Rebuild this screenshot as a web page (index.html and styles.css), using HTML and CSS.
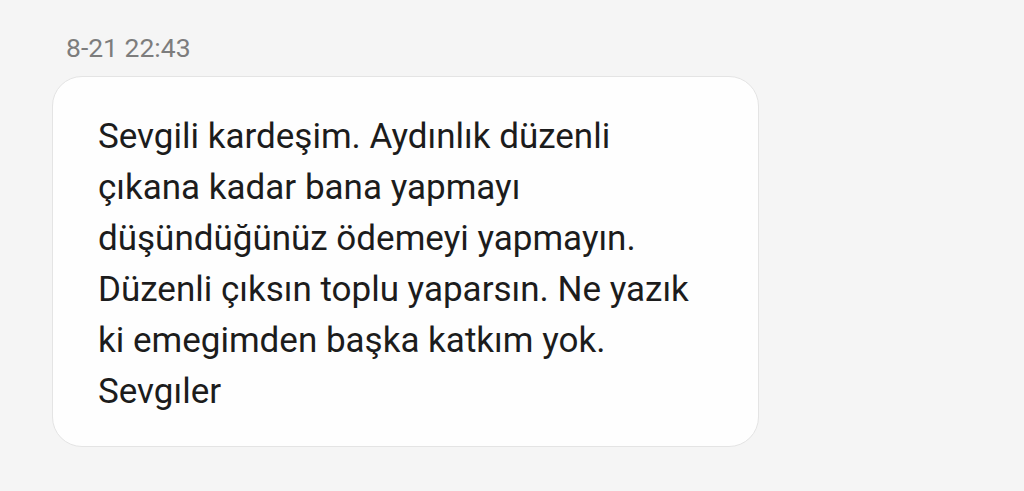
FILE: index.html
```html
<!DOCTYPE html>
<html lang="tr">
<head>
	<meta charset="UTF-8">
	<meta name="viewport" content="width=device-width, initial-scale=1.0">
	<link rel="stylesheet" href="styles.css">
	<title>Mesaj</title>
</head>
<body>
	<div class="thread">
		<div class="time">8-21 22:43</div>
		<div class="bubble">
			<p>Sevgili kardeşim. Aydınlık düzenli<br>
			çıkana kadar bana yapmayı<br>
			düşündüğünüz ödemeyi yapmayın.<br>
			Düzenli çıksın toplu yaparsın. Ne yazık<br>
			ki emegimden başka katkım yok.<br>
			Sevgıler</p>
		</div>
	</div>
</body>
</html>
```

FILE: styles.css
```css
body {
	margin: 0;
	padding: 0;
	font-family: Roboto, 'Noto Sans', Arial, sans-serif;
	background: #f5f5f5;
}

p {
	margin: 0;
}

.thread {
	padding: 31px 0 0 52px;
}

.time {
	font-size: 26.5px;
	line-height: 34px;
	color: #7d7d7d;
	padding-left: 14px;
	margin-bottom: 11px;
}

.bubble {
	width: 707px;
	height: 371px;
	box-sizing: border-box;
	background: #fefefe;
	border: 1px solid #e4e4e4;
	border-radius: 30px;
	padding: 34px 0 0 45px;
}

.bubble p {
	font-size: 35px;
	line-height: 51px;
	color: #1c1c1c;
}
```
